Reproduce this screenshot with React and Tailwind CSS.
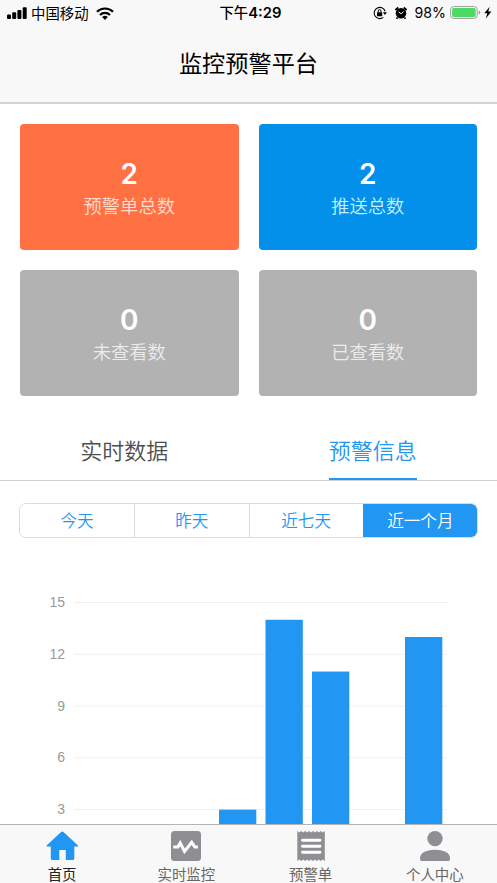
import React from 'react';

const cards = [
  { value: 2, label: '预警单总数', tone: 'bg-[#ff7043] text-[#ffddd2]' },
  { value: 2, label: '推送总数', tone: 'bg-[#0290ea] text-[#c4f0ff]' },
  { value: 0, label: '未查看数', tone: 'bg-[#b2b2b2] text-[#ececec]' },
  { value: 0, label: '已查看数', tone: 'bg-[#b2b2b2] text-[#ececec]' },
];

const ranges = ['今天', '昨天', '近七天', '近一个月'];
const ticks = [15, 12, 9, 6, 3];
const bars = [
  { x: 219, value: 3 },
  { x: 265.5, value: 14 },
  { x: 312, value: 11 },
  { x: 405, value: 13 },
];
const yOf = (value) => 64.5 + (15 - value) * 17.26;

function StatusBar() {
  return (
    <div className="flex h-[26px] items-center justify-between pl-[7px] pr-[5px] text-black">
      <div className="flex w-[200px] items-center">
        <svg className="h-[12px] w-[20px]" viewBox="0 0 20 12">
          <rect x="0" y="7.5" width="4" height="4.5" rx="1" />
          <rect x="5.2" y="5.3" width="4" height="6.7" rx="1" />
          <rect x="10.4" y="3" width="4" height="9" rx="1" />
          <rect x="15.7" y="0.3" width="4" height="11.7" rx="1" />
        </svg>
        <span className="ml-[4px] text-[14.4px] leading-none">中国移动</span>
        <svg className="ml-[7px] h-[13px] w-[18px]" viewBox="0 0 18 13" fill="none" stroke="#000" strokeWidth="2.2">
          <path d="M1 4.8a11.3 11.3 0 0 1 16 0" />
          <path d="M4 8a7.1 7.1 0 0 1 10 0" />
          <path d="M6.2 10.1a4 4 0 0 1 5.6 0L9 12.9z" fill="#000" stroke="none" />
        </svg>
      </div>
      <span className="whitespace-nowrap pl-[2px] text-[14.3px] font-medium leading-none">
        下午<span className="font-[Inter] text-[14.8px] font-semibold">4:29</span>
      </span>
      <div className="flex w-[200px] items-center justify-end">
        <svg className="h-[14px] w-[14px]" viewBox="0 0 14 14">
          <path d="M12.1 5.2A5.6 5.6 0 1 0 10.3 11.4" fill="none" stroke="#000" strokeWidth="1.1" />
          <path d="M9.9 6.3h4l-2 2.8z" />
          <rect x="4" y="6.2" width="5.2" height="4" rx=".5" />
          <path d="M5.2 6.4V5a1.4 1.4 0 0 1 2.8 0v1.4" fill="none" stroke="#000" />
        </svg>
        <svg className="ml-[7px] h-[14px] w-[14px]" viewBox="0 0 14 14">
          <circle cx="7" cy="7.3" r="5.3" />
          <path d="M1.4 4 4.3 1.5M12.6 4 9.7 1.5M3.5 11.500 2.600 12.700M10.500 11.500l.9 1.200" stroke="#000" strokeWidth="1.8" />
          <path d="M7.300 7.800 4.600 5.900M7.300 7.800l2.200-2.400" fill="none" stroke="#fff" strokeWidth="1" />
        </svg>
        <span className="ml-[6px] font-[Inter] text-[14.2px] leading-none">98%</span>
        <svg className="ml-[4px] h-[13px] w-[42px]" viewBox="0 0 42 13">
          <rect x=".6" y=".6" width="26.6" height="11.8" rx="3" fill="#fff" stroke="#999" />
          <rect x="2.1" y="2.1" width="23.6" height="8.8" rx="1.5" fill="#4cd964" />
          <path d="M28.7 4.5q1.6.5 1.6 2t-1.600 2z" fill="#999" />
          <path d="M39.700.8 34.300 7.200h3L35.800 12.400l5.600-6.800h-3.200z" />
        </svg>
      </div>
    </div>
  );
}

function HomeIcon() {
  return (
    <svg className="h-[32px] w-[32px]" viewBox="0 0 32 32" fill="#2196f3">
      <path d="M16.300 1.500Q17 1.500 17.500 2L32 15.500q.3 1-.6 1H28.300v12q0 1.500-1.500 1.500H19.800v-10h-6.500v10H6.300q-1.500 0-1.500-1.500v-12H1.200q-1 0-.6-1L15.100 2q.5-.5 1.200-.5z" />
    </svg>
  );
}

function MonitorIcon() {
  return (
    <svg className="h-[32px] w-[32px]" viewBox="0 0 32 32">
      <rect x="1" y="1" width="30" height="30" rx="3.5" fill="#8e8e93" />
      <path d="M3.200 17h4.700l2.300-4 4.300 8.400 7.200-9 3.200 4.600h3" fill="none" stroke="#fff" strokeWidth="3.100" />
    </svg>
  );
}

function ReceiptIcon() {
  return (
    <svg className="h-[32px] w-[32px]" viewBox="0 0 32 32">
      <path
        d="M2.300 1l1.900 1.500L6.300 1l1.900 1.500L10.200 1l1.900 1.500L14.100 1l1.900 1.500L18 1l1.900 1.500L21.900 1l1.900 1.500L25.800 1l1.900 1.500L29.800 1v30l-2.100-1.500-1.900 1.500-2-1.500-1.900 1.500-2-1.500L18 31l-2-1.500-1.900 1.500-2-1.500-1.900 1.500-2-1.500L6.300 31l-2.100-1.500L2.300 31z"
        fill="#8e8e93"
      />
      <path d="M7.500 10.200h17.500M7.500 16.200h17.500M7.500 22.200h17.500" stroke="#fff" strokeWidth="2.900" strokeLinecap="round" />
    </svg>
  );
}

function PersonIcon() {
  return (
    <svg className="h-[32px] w-[32px]" viewBox="0 0 32 32" fill="#8e8e93">
      <circle cx="16" cy="8.600" r="7.700" />
      <path d="M1 29q0-5.200 4.500-7.200Q10 19.700 16 19.700t10.500 2.100q4.500 2 4.500 7.200 0 2-1.500 2h-27Q1 31 1 29z" />
    </svg>
  );
}

const navItems = [
  { label: '首页', Icon: HomeIcon },
  { label: '实时监控', Icon: MonitorIcon },
  { label: '预警单', Icon: ReceiptIcon },
  { label: '个人中心', Icon: PersonIcon },
];

export default function App() {
  return (
    <div className="flex h-[883px] w-[497px] flex-col overflow-hidden bg-white font-['Noto_Sans_CJK_SC',sans-serif]">
      <header className="h-[104px] shrink-0 border-b-2 border-[#d4d4d4] bg-[#f8f8f8]">
        <StatusBar />
        <h1 className="mt-[18px] text-center text-[23.200px] leading-[36px] text-black">监控预警平台</h1>
      </header>

      <section className="grid shrink-0 grid-cols-2 gap-x-[20px] gap-y-[20.500px] px-[20px] pt-[20px]">
        {cards.map((card) => (
          <div key={card.label} className={`flex h-[125.500px] flex-col items-center rounded-[4px] pt-[32px] ${card.tone}`}>
            <span className="font-[Inter] text-[28px] font-semibold leading-[36px] text-white">{card.value}</span>
            <span className="text-[18.300px] font-[350] leading-[27px]">{card.label}</span>
          </div>
        ))}
      </section>

      <nav className="mt-[24px] grid h-[61px] shrink-0 grid-cols-2 border-b border-[#cfcfcf] text-[22px] leading-[58px]">
        <span className="text-center font-[350] text-[#4d4d4d]">实时数据</span>
        <span className="flex justify-center">
          <span className="h-[60px] border-b-2 border-[#2196f3] font-[350] text-[#2196f3]">预警信息</span>
        </span>
      </nav>

      <div className="mx-[19px] mt-[22px] grid h-[35px] shrink-0 grid-cols-4 overflow-hidden rounded-[7px] border border-[#dcdcdc] text-center text-[16.600px] leading-[32px]">
        {ranges.map((range, i) => (
          <span key={range} className={i === 3 ? 'border-l border-[#2196f3] bg-[#2196f3] font-[350] text-white' : i === 0 ? 'font-[350] text-[#2196f3]' : 'border-l border-[#dcdcdc] font-[350] text-[#2196f3]'}>
            {range}
          </span>
        ))}
      </div>

      <svg className="h-[286px] w-[497px] shrink-0" viewBox="0 0 497 286">
        {ticks.map((tick) => (
          <g key={tick}>
            <text x="65" y={yOf(tick) + 4.5} textAnchor="end" fontSize="14" fill="#999" fontFamily="Liberation Sans, sans-serif">
              {tick}
            </text>
            <path d={`M74 ${yOf(tick)}H447`} stroke="#efefef" />
          </g>
        ))}
        {bars.map((bar) => (
          <rect key={bar.x} x={bar.x} y={yOf(bar.value)} width="37.300" height="300" fill="#2196f3" />
        ))}
      </svg>

      <footer className="grid h-[59px] shrink-0 grid-cols-4 border-t border-[#b5b5b5] bg-[#f8f8f8]">
        {navItems.map(({ label, Icon }, i) => (
          <div key={label} className="flex flex-col items-center pt-[5px]">
            <Icon />
            <span className={`mt-[2px] text-[14.400px] leading-[20px] ${i === 0 ? 'text-[#222]' : 'text-[#666]'}`}>{label}</span>
          </div>
        ))}
      </footer>
    </div>
  );
}
